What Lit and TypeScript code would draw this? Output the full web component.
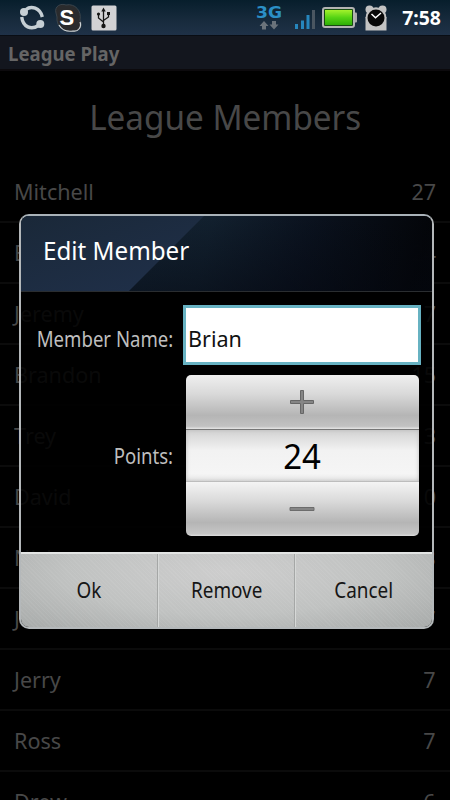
import { LitElement, html, css } from "lit";
import { customElement, state } from "lit/decorators.js";

interface Member { name: string; points: string; }

const font = css`"Noto Sans", "Open Sans", sans-serif`;

@customElement("status-bar")
class StatusBar extends LitElement {
  static styles = css`
    :host { display: flex; align-items: center; height: 35px; box-sizing: border-box;
      background: linear-gradient(#071e2c, #182b3d 60%, #1f3147); padding: 0 9px 0 18px; font-family: ${font}; }
    svg { display: block; flex: none; }
    .spacer { flex: 1; }
    .sync { margin-right: 8px; }
    .skype { margin-right: 8px; }
    .net { margin-right: 11px; }
    .signal { margin-right: 7px; }
    .battery { margin-right: 6px; }
    .alarm { margin-right: 14px; }
    .time { color: #fff; font-weight: 700; font-size: 20px; line-height: 35px; width: 39px; display: flex; justify-content: flex-end; white-space: nowrap; }
    .time span { transform: scaleX(.97); transform-origin: right; flex: none; }
    .s { font: 700 22px "Liberation Sans", sans-serif; }
    .g { font: 700 15px "DejaVu Sans", sans-serif; }
  `;
  render() {
    return html`
      <svg class="sync" width="28" height="28" viewBox="0 0 28 28" fill="none" stroke="#c6cfd4" stroke-width="3.400">
        <path d="M8 5.500C13 1.500 22 3.500 24.300 13"/><path d="M3.700 13C5 23 13 26.500 20.500 21.500"/>
        <circle cx="6" cy="8" r="4" fill="#c6cfd4" stroke="none"/><circle cx="22.300" cy="20" r="4" fill="#c6cfd4" stroke="none"/>
      </svg>
      <svg class="skype" width="29" height="30" viewBox="0 0 29 30">
        <path d="M2 10C0 3 7 0 12 2C21 0 28 8 26 17C29 22 26 29 20 28C8 30 2 22 3 14Z" fill="#2a2b2d" stroke="#3a444c"/>
        <path d="M26 19C28 24 24 29 19 28C12 29 7 26 5 22" fill="none" stroke="#cdd2d5" stroke-width="1.200"/>
        <text class="s" x="5.500" y="21.500" fill="#fff">S</text>
      </svg>
      <svg width="26" height="26" viewBox="0 0 26 26">
        <rect x=".5" y=".5" width="25" height="25" rx="1.5" fill="#d2d2d4"/>
        <path d="M12.500 5V21M12.500 17L7.500 13V9.500M12.500 15.500L17.500 12V8.500" fill="none" stroke="#151515" stroke-width="1.300"/>
        <path d="M10.300 6.500L12.500 2.500L14.700 6.500Z" fill="#151515"/><circle cx="12.500" cy="21" r="2.200" fill="#151515"/>
        <circle cx="7.500" cy="9" r="1.600" fill="#151515"/><rect x="16" y="7" width="3" height="3" fill="#151515"/>
      </svg>
      <span class="spacer"></span>
      <svg class="net" width="27" height="28" viewBox="0 0 27 28">
        <text class="g" x="0" y="14" textLength="26" lengthAdjust="spacingAndGlyphs" fill="#2b8fc6">3G</text>
        <path d="M8 17L12.500 22H10V25.500H6V22H3.500Z" fill="#6a737b"/><path d="M18 25.500L22.500 20.500H20V17H16V20.500H13.500Z" fill="#6a737b"/>
      </svg>
      <svg class="signal" width="21" height="28" viewBox="0 0 21 28">
        <path d="M1 20h3v5H1zM7 16.500h3V25H7zM12.500 11h3V25h-3z" fill="#2686bd"/><path d="M18 6h3V25h-3z" fill="#4a5661"/>
      </svg>
      <svg class="battery" width="36" height="22" viewBox="0 0 36 22">
        <defs><linearGradient id="b" x2="0" y2="1"><stop stop-color="#a4f22c"/><stop offset=".5" stop-color="#56d414"/><stop offset="1" stop-color="#2eae07"/></linearGradient></defs>
        <rect x="30" y="5.500" width="5" height="10" rx="1" fill="#aaa"/>
        <rect x="1" y="1" width="31" height="19" rx="2" fill="#174b10" stroke="#b3b3b3" stroke-width="2"/>
        <rect x="3" y="3" width="27" height="15" fill="url(#b)"/>
      </svg>
      <svg class="alarm" width="24" height="26" viewBox="0 0 24 26">
        <path d="M1.500 12h21V25.500h-21z" fill="#c3c3c3"/><circle cx="5.500" cy="4.500" r="4" fill="#c3c3c3"/><circle cx="18.500" cy="4.500" r="4" fill="#c3c3c3"/>
        <circle cx="12" cy="12.500" r="10.300" fill="#c3c3c3"/><circle cx="12" cy="13" r="8.500" fill="#080808"/>
        <path d="M7.500 9L11.500 12.700L17 8" fill="none" stroke="#fff" stroke-width="1.500"/>
      </svg>
      <div class="time"><span>7:58</span></div>`;
  }
}

@customElement("member-list")
class MemberList extends LitElement {
  static properties = { members: { attribute: false } };
  declare members: Member[];
  static styles = css`
    :host { display: block; font-family: ${font}; color: #484848; }
    .row { height: 61px; box-sizing: border-box; border-bottom: 2px solid #0b0b0b; display: flex; justify-content: space-between;
      align-items: center; padding: 0 14px 1px; font-size: 22px; line-height: 30px; }
    .name { transform: scaleX(.98); transform-origin: left; }
    .pts { transform: scaleX(.98); transform-origin: right; }
  `;
  render() {
    return this.members.map(m => html`<div class="row"><span class="name">${m.name}</span><span class="pts">${m.points}</span></div>`);
  }
}

@customElement("number-picker")
class NumberPicker extends LitElement {
  static properties = { value: { type: Number } };
  declare value: number;
  static styles = css`
    :host { display: flex; flex-direction: column; width: 233px; height: 161px; border-radius: 5px; overflow: hidden; font-family: ${font}; }
    .step { height: 54px; border: 0; padding: 0 1px 0 0; display: grid; place-items: center; box-sizing: border-box;
      background: linear-gradient(#efefef, #d9d9d9 35%, #b5b5b5 75%, #c2c2c2 95%, #e6e6e6); }
    .step.down { background: linear-gradient(#f4f4f4, #dadada 35%, #b5b5b5 75%, #c6c6c6 96%, #dedede); padding-bottom: 0; }
    .value { height: 53px; box-sizing: border-box; border-top: 1px solid #777; border-bottom: 1px solid #bdbdbd; color: #000;
      background: linear-gradient(#d2d2d2, #f2f2f2 40%, #f5f5f5 85%, #e8e8e8); box-shadow: inset 0 0 4px #bbb;
      font-size: 35px; line-height: 51px; height: 53px; display: flex; justify-content: center; padding-right: 1px; }
    .value span { transform: scaleX(.94); }
    svg { display: block; }
  `;
  render() {
    return html`
      <button class="step" @click=${() => this.value++}>
        <svg width="26" height="26" viewBox="0 0 26 26"><path d="M11.500 1.500h3v10h10v3h-10v10h-3v-10h-10v-3h10z" fill="#858585" stroke="#666"/></svg>
      </button>
      <div class="value"><span>${this.value}</span></div>
      <button class="step down" @click=${() => this.value--}>
        <svg width="26" height="6" viewBox="0 0 26 6"><path d="M1 1.500h24v3H1z" fill="#858585" stroke="#6c6c6c"/></svg>
      </button>`;
  }
}

@customElement("edit-dialog")
class EditDialog extends LitElement {
  static styles = css`
    :host { display: flex; flex-direction: column; width: 415px; height: 415px; box-sizing: border-box; border: 2px solid #b4b8ba;
      border-top-color: #a9b2b8; border-radius: 10px; overflow: hidden; background: rgba(0,0,0,.87); font-family: ${font}; }
    .head { height: 76px; flex: none; position: relative; box-sizing: border-box; border-bottom: 1px solid #2a2d30; display: flex; align-items: center; padding: 0 22px 8px;
      color: #fff; font-size: 26px; background: linear-gradient(105deg, #172a3cf0, #132231f0 45%, #0b1320f0 68%, #04060af0 95%); }
    .gloss { position: absolute; inset: 0; clip-path: polygon(0 0, 183px 0, 108px 100%, 0 100%);
      background: linear-gradient(160deg, #1a2838f0, #20304af0 55%, #1d2b40f0); }
    .shade { position: absolute; inset: 0; background: linear-gradient(transparent, rgba(4,7,16,.45)); clip-path: polygon(183px 0, 100% 0, 100% 100%, 108px 100%); }
    .head span { position: relative; transform: scaleX(.93); transform-origin: left; }
    .body { flex: 1; display: grid; grid-template-columns: 152px 238px; grid-template-rows: 60px 161px; column-gap: 10px; row-gap: 10px; padding-top: 13px; align-items: center; }
    .label { justify-self: end; color: #bebebe; font-size: 21px; transform: scaleX(.885); transform-origin: right; white-space: nowrap; }
    .label.name { padding-top: 7px; }
    .field { height: 60px; box-sizing: border-box; border: 3px solid #67b2c2; background: #fff; color: #111; font-size: 22px;
      display: flex; align-items: center; padding: 6px 2px 0; }
    .field span { transform: scaleX(.98); transform-origin: left; }
    number-picker { margin-left: 3px; }
    .actions { height: 75px; flex: none; display: grid; grid-template-columns: 137px 137px 1fr; box-sizing: border-box; border-top: 2px solid #e3e5e4;
      background: repeating-linear-gradient(45deg, rgba(255,255,255,.05) 0 1px, transparent 1px 3px), radial-gradient(ellipse at 50% 25%, #cdcdcd, #c0c2c1 55%, #a8abaa); }
    .actions button { border: 0; border-left: 1px solid #d6d8d7; box-shadow: -1px 0 #a5a7a6; background: none; font: 21px ${font}; color: #161616; padding: 0 0 1px; }
    .actions button:first-child { border-left: 0; box-shadow: none; padding-right: 2px; }
    .actions span { display: inline-block; transform: scaleX(.9); }
  `;
  render() {
    return html`
      <div class="head"><div class="gloss"></div><div class="shade"></div><span>Edit Member</span></div>
      <div class="body">
        <div class="label name">Member Name:</div><div class="field"><span>Brian</span></div>
        <div class="label">Points:</div><number-picker .value=${24}></number-picker>
      </div>
      <div class="actions"><button><span>Ok</span></button><button><span>Remove</span></button><button><span>Cancel</span></button></div>`;
  }
}

@customElement("app-root")
class AppRoot extends LitElement {
  @state() members: Member[] = [
    { name: "Mitchell", points: "27" }, { name: "Brian", points: "24" }, { name: "Jeremy", points: "17" },
    { name: "Brandon", points: "15" }, { name: "Trey", points: "13" }, { name: "David", points: "10" },
    { name: "Nick", points: "8" }, { name: "Josh", points: "7" }, { name: "Jerry", points: "7" },
    { name: "Ross", points: "7" }, { name: "Drew", points: "6" },
  ];
  static styles = css`
    :host { display: block; width: 450px; height: 800px; position: relative; overflow: hidden; background: #000; font-family: ${font}; }
    .title { height: 36px; box-sizing: border-box; background: #13161e; border-top: 1px solid #090d14; border-bottom: 2px solid #0c0a0d; color: #656565; font-weight: 700; font-size: 20px;
      line-height: 36px; padding-left: 8px; }
    .title span { display: inline-block; transform: scaleX(.93); transform-origin: left; }
    .heading { height: 91px; box-sizing: border-box; text-align: center; color: #484848; font-size: 35px; line-height: 92px; }
    .heading span { display: inline-block; transform: scaleX(.95); }
    edit-dialog { position: absolute; left: 19px; top: 214px; }
  `;
  render() {
    return html`
      <status-bar></status-bar>
      <div class="title"><span>League Play</span></div>
      <div class="heading"><span>League Members</span></div>
      <member-list .members=${this.members}></member-list>
      <edit-dialog></edit-dialog>`;
  }
}
